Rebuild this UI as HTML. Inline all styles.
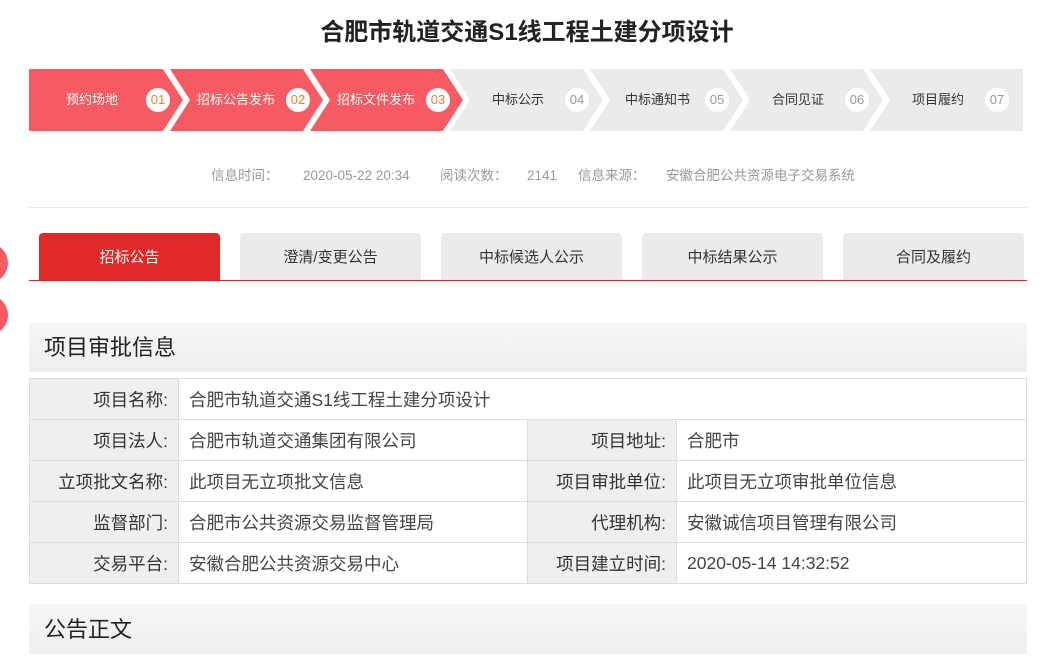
<!DOCTYPE html>
<html><head><meta charset="utf-8"><style>
*{margin:0;padding:0;box-sizing:border-box}
body{width:1054px;height:646px;overflow:hidden;background:#fff;position:relative;font-family:"Liberation Sans","Noto Sans CJK SC",sans-serif;color:#333}
.abs{position:absolute}
.title{left:0;width:1054px;top:16px;text-align:center;font-size:24px;font-weight:bold;color:#222;line-height:34px}
.st{font-size:13px;line-height:16px;top:92px}
.num{width:24px;height:24px;border-radius:50%;background:#fff;font-size:13px;text-align:center;line-height:24px;top:88px}
.m{top:167px;font-size:13.5px;color:#999;line-height:18px;white-space:nowrap}
.tab{top:233px;height:47px;width:181px;border-radius:4px 4px 0 0;background:#ebebeb;text-align:center;line-height:49px;font-size:15px;color:#333}
.sec{left:29px;width:998px;background:linear-gradient(#f7f7f7,#eeeeee);font-size:22px;padding-left:15px;color:#222}
table{position:absolute;left:29px;top:378px;width:998px;border-collapse:collapse;font-size:17.5px;color:#444}
td{border:1px solid #dcdcdc;height:41px;padding:0 10px}
td.l{background:#efefef;text-align:right;width:149px;color:#333}
</style></head><body>
<div class="abs title">合肥市轨道交通S1线工程土建分项设计</div>
<svg class="abs" style="left:0;top:0" width="1054" height="140">
<polygon points="29,69 163,69 183,100 163,131 29,131" fill="#f65a63"/>
<polygon points="170,69 303,69 323,100 303,131 170,131 190,100" fill="#f65a63"/>
<polygon points="310,69 443,69 463,100 443,131 310,131 330,100" fill="#f65a63"/>
<polygon points="450,69 583,69 603,100 583,131 450,131 470,100" fill="#ebebeb"/>
<polygon points="590,69 723,69 743,100 723,131 590,131 610,100" fill="#ebebeb"/>
<polygon points="730,69 863,69 883,100 863,131 730,131 750,100" fill="#ebebeb"/>
<polygon points="870,69 1023,69 1023,131 870,131 890,100" fill="#ebebeb"/>
</svg>
<div class="abs st" style="left:66px;color:#fff">预约场地</div>
<div class="abs num" style="left:146px;color:#e8842c">01</div>
<div class="abs st" style="left:197px;color:#fff">招标公告发布</div>
<div class="abs num" style="left:286px;color:#e8842c">02</div>
<div class="abs st" style="left:337px;color:#fff">招标文件发布</div>
<div class="abs num" style="left:426px;color:#e8842c">03</div>
<div class="abs st" style="left:492px">中标公示</div>
<div class="abs num" style="left:565px;color:#999">04</div>
<div class="abs st" style="left:625px">中标通知书</div>
<div class="abs num" style="left:705px;color:#999">05</div>
<div class="abs st" style="left:772px">合同见证</div>
<div class="abs num" style="left:845px;color:#999">06</div>
<div class="abs st" style="left:912px">项目履约</div>
<div class="abs num" style="left:985px;color:#999">07</div>
<div class="abs m" style="left:211px">信息时间：</div>
<div class="abs m" style="left:303px">2020-05-22 20:34</div>
<div class="abs m" style="left:440px">阅读次数：</div>
<div class="abs m" style="left:527px">2141</div>
<div class="abs m" style="left:578px">信息来源：</div>
<div class="abs m" style="left:666px">安徽合肥公共资源电子交易系统</div>
<div class="abs" style="left:29px;top:207px;width:998px;height:1px;background:#e6e6e6"></div>
<div class="abs" style="left:-32px;top:243px;width:40px;height:40px;border-radius:50%;background:#f65a63"></div>
<div class="abs" style="left:-32px;top:295px;width:40px;height:40px;border-radius:50%;background:#f65a63"></div>
<div class="abs tab" style="left:39px;background:#e02a27;color:#fff">招标公告</div>
<div class="abs tab" style="left:240px">澄清/变更公告</div>
<div class="abs tab" style="left:441px">中标候选人公示</div>
<div class="abs tab" style="left:642px">中标结果公示</div>
<div class="abs tab" style="left:843px">合同及履约</div>
<div class="abs" style="left:29px;top:280px;width:998px;height:1px;background:#d9262c"></div>
<div class="abs sec" style="top:322px;height:50px;line-height:52px">项目审批信息</div>
<table>
<tr><td class="l">项目名称:</td><td colspan="3">合肥市轨道交通S1线工程土建分项设计</td></tr>
<tr><td class="l">项目法人:</td><td style="width:349px">合肥市轨道交通集团有限公司</td><td class="l">项目地址:</td><td>合肥市</td></tr>
<tr><td class="l">立项批文名称:</td><td>此项目无立项批文信息</td><td class="l">项目审批单位:</td><td>此项目无立项审批单位信息</td></tr>
<tr><td class="l">监督部门:</td><td>合肥市公共资源交易监督管理局</td><td class="l">代理机构:</td><td>安徽诚信项目管理有限公司</td></tr>
<tr><td class="l">交易平台:</td><td>安徽合肥公共资源交易中心</td><td class="l">项目建立时间:</td><td>2020-05-14 14:32:52</td></tr>
</table>
<div class="abs sec" style="top:604px;height:50px;line-height:52px">公告正文</div>
</body></html>
